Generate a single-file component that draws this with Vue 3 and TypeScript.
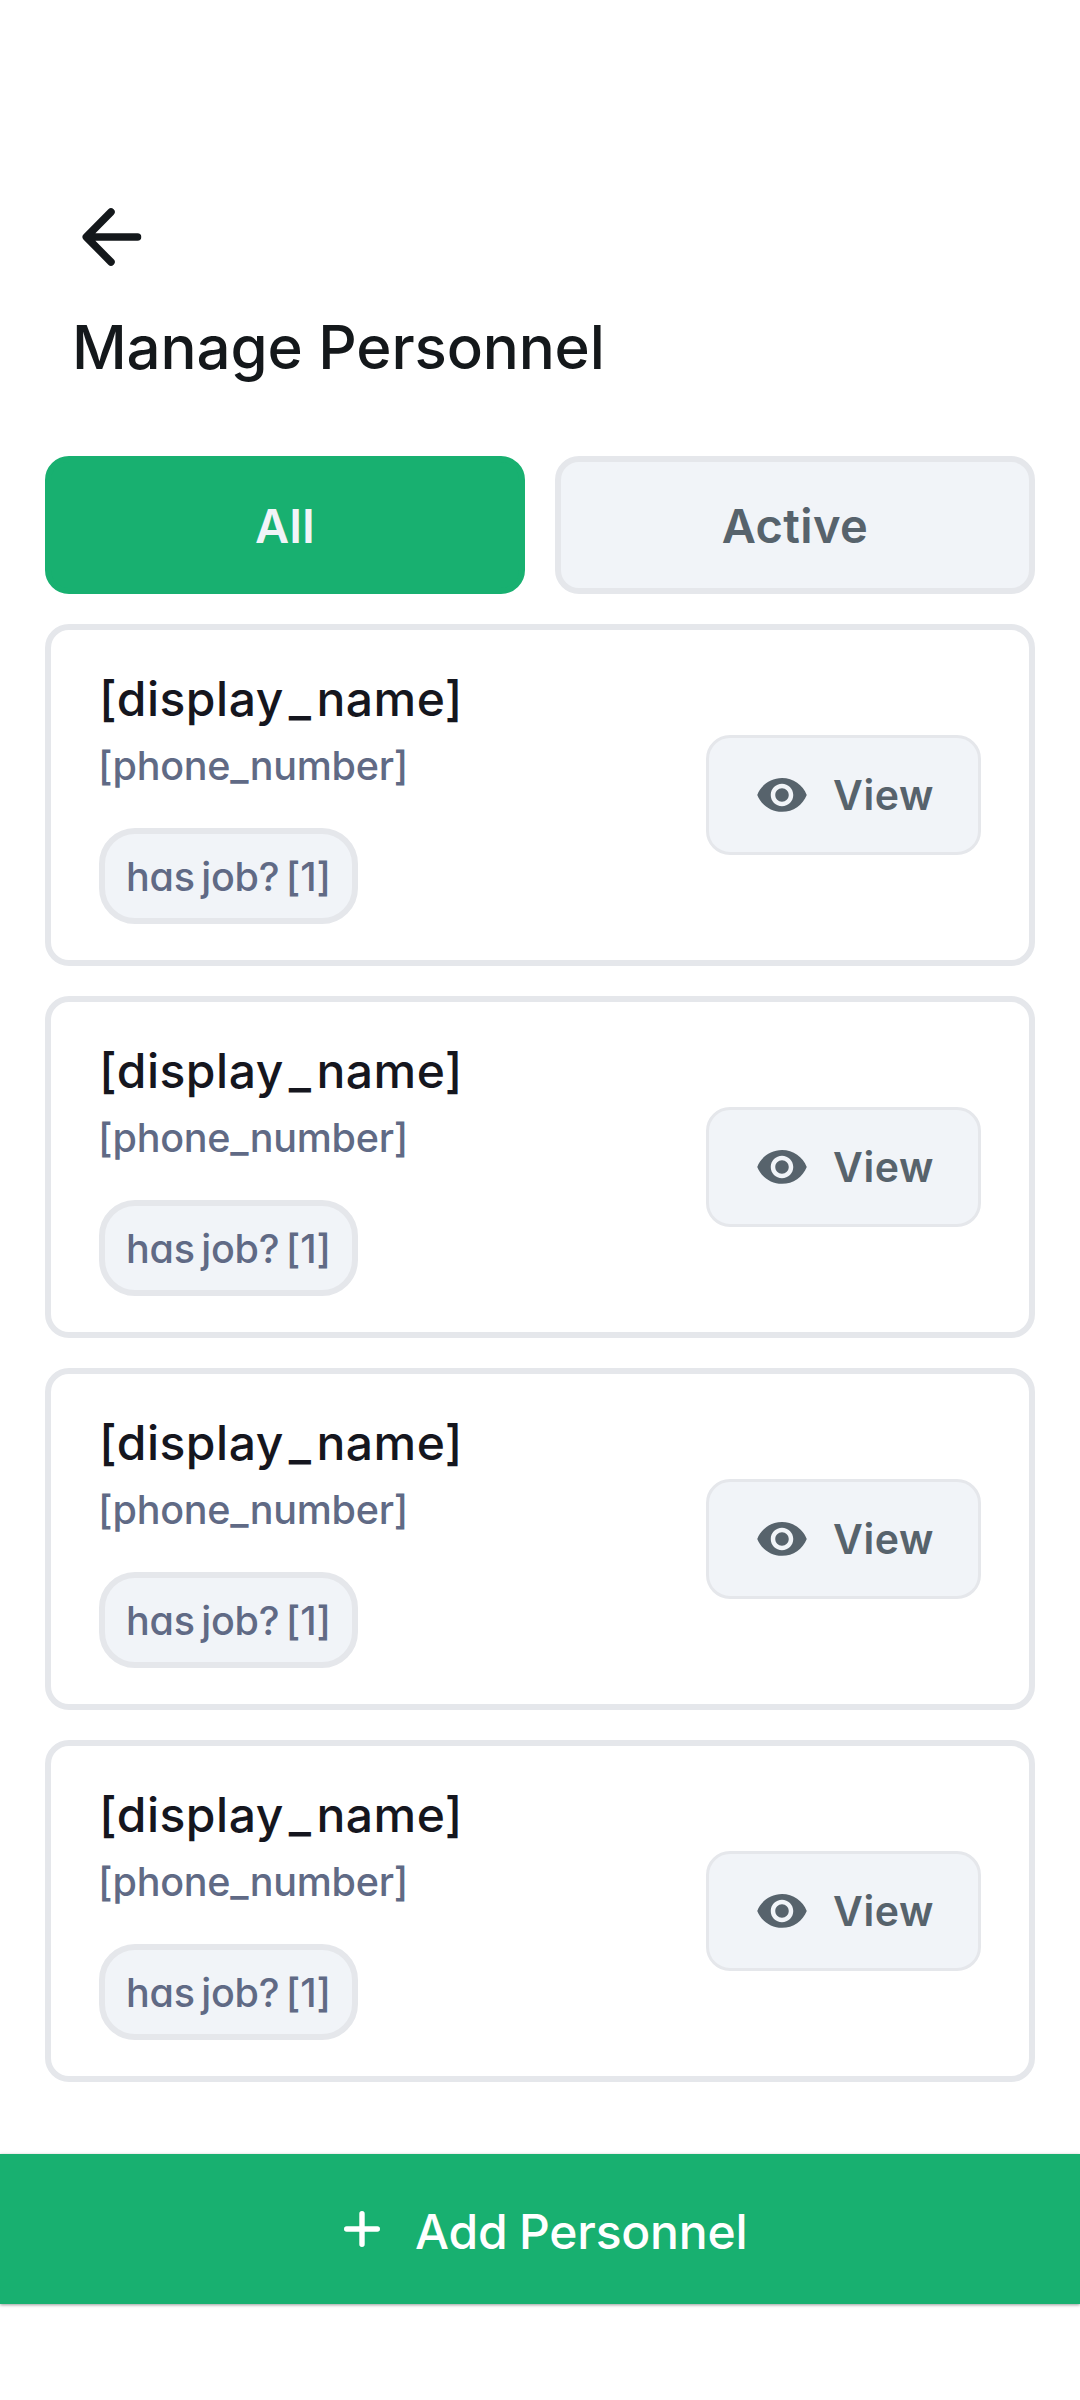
<script setup lang="ts">
interface Person {
  id: number
  name: string[]
  phone: string
  job: string
}

const people: Person[] = [1, 2, 3, 4].map((id) => ({
  id,
  name: ['[display', '_', 'name]'],
  phone: '[phone_number]',
  job: 'has job? [1]',
}))
</script>

<template>
  <main class="screen">
    <header class="header">
      <svg class="back" viewBox="0 0 90 90" fill="none" stroke="#14181b" stroke-width="7.5" stroke-linecap="round" stroke-linejoin="round">
        <path d="M80.5 45H30M54 20L29.3 45L54 70" />
      </svg>
      <h1 class="title"><span>Manage Personnel</span></h1>
    </header>

    <nav class="tabs">
      <button class="tab active"><span>All</span></button>
      <button class="tab"><span>Active</span></button>
    </nav>

    <section class="list">
      <article v-for="p in people" :key="p.id" class="card">
        <div class="info">
          <div class="name"><span v-for="(part, i) in p.name" :key="i" :class="{ sep: part === '_' }">{{ part }}</span></div>
          <div class="phone">{{ p.phone }}</div>
          <div class="chip"><span>{{ p.job }}</span></div>
        </div>
        <button class="view">
          <svg class="eye" viewBox="0 0 24 24" fill="#57636c">
            <path d="M12 4C7 4 2.73 7.11 1 11.5 2.73 15.89 7 19 12 19s9.27-3.11 11-7.5C21.27 7.11 17 4 12 4zm0 12.5c-2.76 0-5-2.24-5-5s2.24-5 5-5 5 2.24 5 5-2.24 5-5 5zm0-8c-1.66 0-3 1.34-3 3s1.34 3 3 3 3-1.34 3-3-1.34-3-3-3z" />
          </svg>
          <span>View</span>
        </button>
      </article>
    </section>

    <button class="add">
      <svg class="plus" viewBox="0 0 36 36" fill="none" stroke="#fff" stroke-width="5.4" stroke-linecap="round">
        <path d="M18 2.7V33.3M2.7 18H33.3" />
      </svg>
      <span>Add Personnel</span>
    </button>
  </main>
</template>

<style>
body {
  background: #fff;
}
</style>

<style scoped>
.screen {
  width: 1080px;
  height: 2400px;
  box-sizing: border-box;
  padding-top: 192px;
  background: #fff;
  display: flex;
  flex-direction: column;
  font-family: Inter, 'Liberation Sans', sans-serif;
  overflow: hidden;
}
.screen * {
  box-sizing: border-box;
}
button {
  font-family: inherit;
  margin: 0;
  padding: 0;
  border: 0;
}
span,
.name,
.phone {
  white-space: nowrap;
}
.header {
  height: 264px;
  padding-left: 57px;
  display: flex;
  flex-direction: column;
}
.back {
  width: 90px;
  height: 90px;
  display: block;
}
.title {
  margin: 29px 0 0 15px;
  font: 500 60px/72px Inter, sans-serif;
  letter-spacing: -0.15px;
  color: #14181b;
}
.tabs {
  display: flex;
  gap: 30px;
  padding: 0 45px;
}
.tab {
  flex: 1;
  height: 138px;
  border-radius: 24px;
  border: 6px solid #e5e7eb;
  background: #f1f4f8;
  color: #57636c;
  font-size: 47px;
  line-height: 60px;
  font-weight: 600;
  letter-spacing: 0.4px;
  padding-top: 1px;
}
.tab.active {
  background: #18b070;
  border-color: #18b070;
  color: #f1f4f8;
}
.list {
  padding: 30px 45px 0;
  display: flex;
  flex-direction: column;
  gap: 30px;
}
.card {
  height: 342px;
  border: 6px solid #e5e7eb;
  border-radius: 24px;
  padding: 36px 48px;
  display: flex;
  justify-content: space-between;
  align-items: center;
}
.info {
  height: 258px;
  display: flex;
  flex-direction: column;
  align-items: flex-start;
}
.name {
  margin-top: 3px;
  font: 500 48px/60px Inter, sans-serif;
  letter-spacing: 0.5px;
  color: #15161e;
}
.sep {
  margin: 0 5px;
}
.phone {
  margin: 11px 0 0 -1px;
  font-size: 39.5px;
  line-height: 53px;
  font-weight: 550;
  letter-spacing: -0.25px;
  color: #606a85;
}
.chip {
  margin-top: 35px;
  width: 259px;
  height: 96px;
  flex: none;
  border: 6px solid #e5e7eb;
  border-radius: 36px;
  background: #f1f4f8;
  color: #606a85;
  font-size: 39.5px;
  font-weight: 550;
  font-feature-settings: 'cv11';
  letter-spacing: -0.2px;
  word-spacing: -4px;
  line-height: 86px;
  padding-left: 21px;
}
.view {
  width: 275px;
  height: 120px;
  border: 3px solid #e5e7eb;
  border-radius: 24px;
  background: #f1f4f8;
  color: #57636c;
  font-size: 41px;
  font-weight: 600;
  letter-spacing: 0.6px;
  line-height: 53px;
  display: flex;
  align-items: center;
  padding-left: 46px;
}
.eye {
  width: 54px;
  height: 54px;
  margin: 1px 24px 0 0;
}
.add {
  margin-top: 72px;
  height: 150px;
  flex: none;
  background: #18b070;
  color: #fff;
  box-shadow: 0 1px 3px rgba(0, 0, 0, 0.4);
  font-size: 48px;
  line-height: 60px;
  font-weight: 450;
  letter-spacing: -0.2px;
  word-spacing: -1px;
  display: flex;
  align-items: center;
  padding-left: 344px;
}
.add span {
  padding-top: 5px;
}
.plus {
  width: 36px;
  height: 36px;
  margin-right: 35px;
}
</style>
